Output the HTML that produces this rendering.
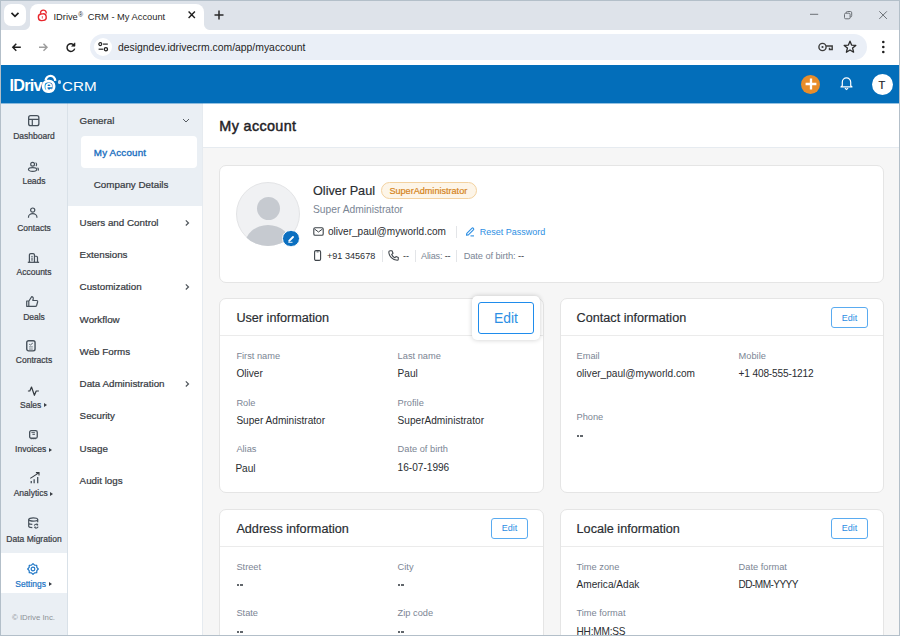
<!DOCTYPE html>
<html><head><meta charset="utf-8">
<style>
*{box-sizing:border-box;margin:0;padding:0}
html,body{width:900px;height:636px;overflow:hidden;background:#fff}
body{font-family:"Liberation Sans",sans-serif;position:relative}
.t{position:absolute;white-space:nowrap}
svg{position:absolute;overflow:visible}
</style></head><body>
<div class="t" style="left:0px;top:0px;width:900px;height:30px;background:#dee3ea"></div>
<div class="t" style="left:30px;top:4px;width:174px;height:27px;background:#fff;border-radius:8px 8px 0 0"></div>
<div class="t" style="left:24px;top:24px;width:6px;height:6px;background:radial-gradient(circle at 0 0,#dee3ea 5.5px,#fff 6.5px)"></div>
<div class="t" style="left:204px;top:24px;width:6px;height:6px;background:radial-gradient(circle at 6px 0,#dee3ea 5.5px,#fff 6.5px)"></div>
<div class="t" style="left:4px;top:4px;width:22px;height:22px;background:#fff;border-radius:7px"></div>
<svg style="left:10px;top:11px" width="10" height="8" viewBox="0 0 10 8"><path d="M1.5 1.8 L5 5.3 L8.5 1.8" fill="none" stroke="#1f1f1f" stroke-width="1.7"/></svg>
<svg style="left:37px;top:9px" width="11" height="12" viewBox="0 0 11 12"><path d="M3.6 4.8 L3.5 3.6 A2.9 2.9 0 0 1 9.2 3.4 L9.3 4.5" fill="none" stroke="#e8262c" stroke-width="1.3"/><rect x="1.4" y="4.9" width="7.8" height="6.6" rx="3" transform="rotate(-6 5.3 8.2)" fill="none" stroke="#e8262c" stroke-width="1.4"/><rect x="4.8" y="7.1" width="1.1" height="2.4" fill="#e8262c" opacity="0.7"/></svg>
<div class="t" style="left:53.50px;top:10.33px;font-size:9.3px;line-height:9.3px;color:#1f1f1f;font-weight:normal;">IDrive<span style="font-size:6.5px;vertical-align:3px;margin-left:0.5px;margin-right:2px">®</span> CRM - My Account</div>
<svg style="left:188.2px;top:11.4px" width="8" height="8" viewBox="0 0 8 8"><path d="M0.6 0.6 L6.9 6.9 M6.9 0.6 L0.6 6.9" stroke="#1f1f1f" stroke-width="1.4"/></svg>
<svg style="left:214px;top:10px" width="10" height="10" viewBox="0 0 10 10"><path d="M0.5 5 H9.5 M5 0.5 V9.5" stroke="#2a2a2a" stroke-width="1.5"/></svg>
<svg style="left:810px;top:10px" width="9" height="9" viewBox="0 0 9 9"><path d="M0 4.3 H8.2" stroke="#6b7076" stroke-width="1"/></svg>
<svg style="left:844px;top:11px" width="9" height="9" viewBox="0 0 9 9"><rect x="0.5" y="2.2" width="5.6" height="5.6" rx="1.2" fill="none" stroke="#6b7076" stroke-width="1"/><path d="M2.2 2.2 V1.8 A1.3 1.3 0 0 1 3.5 0.5 H6.4 A1.3 1.3 0 0 1 7.7 1.8 V4.7 A1.3 1.3 0 0 1 6.4 6 H6.1" fill="none" stroke="#6b7076" stroke-width="1"/></svg>
<svg style="left:878.7px;top:11.2px" width="9" height="9" viewBox="0 0 9 9"><path d="M0.3 0.3 L7.9 7.9 M7.9 0.3 L0.3 7.9" stroke="#6b7076" stroke-width="1"/></svg>
<div class="t" style="left:1px;top:30px;width:898px;height:35px;background:#fff;border-radius:6px 6px 0 0"></div>
<div class="t" style="left:90px;top:34px;width:777px;height:26px;background:#eaeff7;border-radius:13px"></div>
<div class="t" style="left:93.6px;top:37.8px;width:18px;height:18px;background:#fff;border-radius:50%"></div>
<svg style="left:12px;top:42.8px" width="9" height="9" viewBox="0 0 9 9"><path d="M4.3 0.7 L0.8 4.2 L4.3 7.7 M1 4.2 H8.8" fill="none" stroke="#1f1f1f" stroke-width="1.45"/></svg>
<svg style="left:38.8px;top:42.8px" width="9" height="9" viewBox="0 0 9 9"><path d="M4.5 0.7 L8 4.2 L4.5 7.7 M7.8 4.2 H0" fill="none" stroke="#9e9e9e" stroke-width="1.45"/></svg>
<svg style="left:65.6px;top:42.8px" width="10" height="9" viewBox="0 0 10 9"><path d="M8.3 2.6 A3.9 3.9 0 1 0 8.7 5.6" fill="none" stroke="#1f1f1f" stroke-width="1.45"/><path d="M5.6 3.2 H9 V-0.2 Z" fill="#1f1f1f" stroke="#1f1f1f" stroke-width="0.6" stroke-linejoin="round"/></svg>
<svg style="left:97.5px;top:42.3px" width="11" height="10" viewBox="0 0 11 10"><circle cx="2.3" cy="2.1" r="1.5" fill="none" stroke="#1f1f1f" stroke-width="1.15"/><path d="M5 2.1 H9.8" stroke="#1f1f1f" stroke-width="1.15"/><circle cx="7.9" cy="7.2" r="1.6" fill="none" stroke="#1f1f1f" stroke-width="1.3"/><path d="M0.6 7.2 H5.2" stroke="#1f1f1f" stroke-width="1.15"/></svg>
<div class="t" style="left:118.00px;top:43.10px;font-size:10.4px;line-height:10.4px;color:#1f1f1f;font-weight:normal;">designdev.idrivecrm.com/app/myaccount</div>
<svg style="left:818px;top:41px" width="16" height="12" viewBox="0 0 16 12"><circle cx="4.5" cy="6" r="3.6" fill="none" stroke="#3c3c3c" stroke-width="1.4"/><circle cx="4.5" cy="6" r="1.1" fill="#3c3c3c"/><path d="M8.1 5 H14.2 V8.5 H11.5 V6.8" fill="none" stroke="#3c3c3c" stroke-width="1.4"/></svg>
<svg style="left:843px;top:40px" width="14" height="14" viewBox="0 0 14 14"><path d="M7 1.2 L8.6 5.1 L12.8 5.4 L9.6 8.1 L10.6 12.2 L7 10 L3.4 12.2 L4.4 8.1 L1.2 5.4 L5.4 5.1 Z" fill="none" stroke="#2a2a2a" stroke-width="1.3" stroke-linejoin="round"/></svg>
<svg style="left:881px;top:40px" width="5" height="14" viewBox="0 0 5 14"><circle cx="2.3" cy="2" r="1.3" fill="#1f1f1f"/><circle cx="2.3" cy="7" r="1.3" fill="#1f1f1f"/><circle cx="2.3" cy="12" r="1.3" fill="#1f1f1f"/></svg>
<div class="t" style="left:0px;top:65px;width:900px;height:38px;background:#036eba"></div>
<div class="t" style="left:9.50px;top:76.89px;font-size:16.2px;line-height:16.2px;color:#fff;font-weight:bold;letter-spacing:-0.75px">IDriv</div>
<svg style="left:38px;top:70px" width="24" height="26" viewBox="0 0 24 26"><path d="M7.6 10.5 A4.9 5.6 0 0 1 17.3 10.9" fill="none" stroke="#fff" stroke-width="2.4"/><rect x="5.3" y="11.2" width="10.7" height="10.5" rx="4.6" fill="#036eba" stroke="#fff" stroke-width="2.8"/><text x="10.7" y="20.6" text-anchor="middle" font-family="Liberation Sans" font-weight="bold" font-size="14" fill="#fff">e</text></svg>
<div class="t" style="left:57.5px;top:80px;width:3.5px;height:3.5px;border-radius:50%;background:#cfe0f0"></div>
<div class="t" style="left:62.00px;top:77.73px;font-size:15.2px;line-height:15.2px;color:#fff;font-weight:normal;transform:scaleY(0.82);transform-origin:0 90%;">CRM</div>
<div class="t" style="left:801.3px;top:74.8px;width:19.2px;height:19.2px;background:#e88d2a;border-radius:50%"></div>
<svg style="left:805px;top:78px" width="12" height="12" viewBox="0 0 12 12"><path d="M6 0.6 V11.4 M0.6 6 H11.4" stroke="#fff" stroke-width="2.3"/></svg>
<svg style="left:840px;top:76px" width="13" height="14" viewBox="0 0 13 14"><path d="M2.3 9.6 V6.2 A4.2 4.3 0 0 1 10.7 6.2 V9.6 L12 10.9 H1 Z" fill="none" stroke="#fff" stroke-width="1.2" stroke-linejoin="round"/><path d="M4.9 12.1 L6.5 13.5 L8.1 12.1" fill="none" stroke="#fff" stroke-width="1.1"/></svg>
<div class="t" style="left:872px;top:73.5px;width:21px;height:21px;background:#fff;border-radius:50%"></div>
<div class="t" style="left:878.60px;top:79.89px;font-size:11px;line-height:11px;color:#1f2328;font-weight:normal;-webkit-text-stroke:0.2px currentColor">T</div>
<div class="t" style="left:0px;top:103px;width:68px;height:533px;background:#eaeff4;border-right:1px solid #d9e1e8"></div>
<div class="t" style="left:1px;top:553px;width:66px;height:40px;background:#fff"></div>
<svg style="left:28px;top:114.5px" width="14" height="14" viewBox="0 0 14 14"><rect x="0.65" y="0.65" width="10.2" height="10" rx="2" fill="none" stroke="#46505a" stroke-width="1.3"/><path d="M0.65 4.3 H10.85 M4.3 4.3 V10.65" stroke="#46505a" stroke-width="1.2"/></svg>
<svg style="left:27px;top:161px" width="14" height="14" viewBox="0 0 14 14"><circle cx="5.6" cy="3.3" r="1.9" fill="none" stroke="#46505a" stroke-width="1.2"/><path d="M8.6 1.6 A2.3 2.3 0 0 1 8.9 5.2" fill="none" stroke="#46505a" stroke-width="1.1"/><ellipse cx="5.6" cy="8.5" rx="4.15" ry="1.85" fill="none" stroke="#46505a" stroke-width="1.2"/><path d="M10.5 6.8 A2.6 2.2 0 0 1 11 9.7" fill="none" stroke="#46505a" stroke-width="1.1"/></svg>
<svg style="left:27px;top:206px" width="14" height="14" viewBox="0 0 14 14"><circle cx="5.7" cy="4.1" r="2.1" fill="none" stroke="#46505a" stroke-width="1.2"/><path d="M1.5 11.7 V11 A4.2 3.4 0 0 1 9.9 11 V11.7" fill="none" stroke="#46505a" stroke-width="1.2"/></svg>
<svg style="left:27px;top:252px" width="14" height="14" viewBox="0 0 14 14"><path d="M0.8 10.3 H12.1" stroke="#46505a" stroke-width="1.25"/><path d="M2.4 10.3 V3 A1.4 1.4 0 0 1 3.8 1.6 H6.05 A1.4 1.4 0 0 1 7.45 3 V10.3 M7.45 4.25 H9.3 A1.2 1.2 0 0 1 10.5 5.45 V10.3" fill="none" stroke="#46505a" stroke-width="1.2"/><circle cx="5" cy="4.4" r="0.65" fill="#46505a"/><path d="M5 5.6 V8.7" stroke="#46505a" stroke-width="1.1"/></svg>
<svg style="left:26px;top:296px" width="14" height="14" viewBox="0 0 14 14"><path d="M0.7 5 H2.8 V10.3 H0.7 Z M2.8 5.2 L5.6 0.7 C6.9 0.7 7.5 1.7 7.2 3 L6.8 4.5 H10.5 C11.4 4.5 11.8 5.2 11.6 6 L10.6 9.5 C10.4 10.1 10 10.3 9.4 10.3 H2.8" fill="none" stroke="#46505a" stroke-width="1.2" stroke-linejoin="round"/></svg>
<svg style="left:26px;top:339.5px" width="14" height="14" viewBox="0 0 14 14"><rect x="0.75" y="0.75" width="8.3" height="10.1" rx="1.8" fill="none" stroke="#46505a" stroke-width="1.4"/><path d="M3.2 4.1 L4.3 5 L6.8 3.1" fill="none" stroke="#46505a" stroke-width="0.9"/><path d="M3 6.6 H6.8 M3 8 H6.8 M3 9.3 H6.8" stroke="#8a939b" stroke-width="0.8"/></svg>
<svg style="left:27px;top:385.5px" width="14" height="14" viewBox="0 0 14 14"><path d="M0.9 5 H2.8 L4.5 1 L7.4 9.3 L9.2 5 H11.9" fill="none" stroke="#33393f" stroke-width="1.2" stroke-linejoin="round"/></svg>
<svg style="left:29px;top:430px" width="14" height="14" viewBox="0 0 14 14"><rect x="0.65" y="0.65" width="7.6" height="7.6" rx="1.5" fill="none" stroke="#46505a" stroke-width="1.3"/><path d="M2.4 2.5 H5.9" stroke="#46505a" stroke-width="0.8"/><path d="M3.4 4.3 H5.9" stroke="#46505a" stroke-width="1.1"/><path d="M1.8 9.4 H2.8 M3.7 9.4 H4.7 M5.6 9.4 H6.6" stroke="#9aa2aa" stroke-width="0.7"/></svg>
<svg style="left:29.5px;top:471.5px" width="14" height="14" viewBox="0 0 14 14"><path d="M1.25 9.1 V11.3 M4.15 7.2 V11.3 M7.7 4.9 V11.3" stroke="#46505a" stroke-width="1.3"/><path d="M0.3 6.4 L8.4 1.1 M5.9 0.6 H9 V3.6" fill="none" stroke="#33393f" stroke-width="1.1"/></svg>
<svg style="left:27.5px;top:516.5px" width="14" height="14" viewBox="0 0 14 14"><ellipse cx="5.2" cy="2.5" rx="4.5" ry="1.65" fill="none" stroke="#46505a" stroke-width="1.2"/><path d="M0.7 2.5 V9.3 C0.7 10.1 2 10.6 4.3 10.7 M0.7 6.1 C0.7 6.9 2 7.3 4.3 7.4 M9.7 2.5 V5.2" fill="none" stroke="#46505a" stroke-width="1.2"/><path d="M6.3 8.6 A2 2 0 0 1 9.9 8.1 M10.1 9.6 A2 2 0 0 1 6.5 10.2" fill="none" stroke="#46505a" stroke-width="1.1"/><path d="M9.2 6.6 L10.3 8.3 L8.5 8.5 Z M7.2 11.4 L6.1 9.7 L7.9 9.5 Z" fill="#46505a"/></svg>
<div class="t" style="left:-26.00px;width:120px;text-align:center;top:131.90px;font-size:8.5px;line-height:8.5px;color:#3b4046;font-weight:normal;-webkit-text-stroke:0.22px currentColor">Dashboard</div>
<div class="t" style="left:-26.00px;width:120px;text-align:center;top:176.60px;font-size:8.5px;line-height:8.5px;color:#3b4046;font-weight:normal;-webkit-text-stroke:0.22px currentColor">Leads</div>
<div class="t" style="left:-26.00px;width:120px;text-align:center;top:223.60px;font-size:8.5px;line-height:8.5px;color:#3b4046;font-weight:normal;-webkit-text-stroke:0.22px currentColor">Contacts</div>
<div class="t" style="left:-26.00px;width:120px;text-align:center;top:268.00px;font-size:8.5px;line-height:8.5px;color:#3b4046;font-weight:normal;-webkit-text-stroke:0.22px currentColor">Accounts</div>
<div class="t" style="left:-26.00px;width:120px;text-align:center;top:312.60px;font-size:8.5px;line-height:8.5px;color:#3b4046;font-weight:normal;-webkit-text-stroke:0.22px currentColor">Deals</div>
<div class="t" style="left:-26.00px;width:120px;text-align:center;top:356.30px;font-size:8.5px;line-height:8.5px;color:#3b4046;font-weight:normal;-webkit-text-stroke:0.22px currentColor">Contracts</div>
<div class="t" style="left:-26.50px;width:120px;text-align:center;top:400.80px;font-size:8.5px;line-height:8.5px;color:#3b4046;font-weight:normal;-webkit-text-stroke:0.22px currentColor">Sales<span style="display:inline-block;width:0;height:0;border-left:3px solid #3b4046;border-top:2.2px solid transparent;border-bottom:2.2px solid transparent;margin-left:2.6px;vertical-align:0.5px"></span></div>
<div class="t" style="left:-26.50px;width:120px;text-align:center;top:445.00px;font-size:8.5px;line-height:8.5px;color:#3b4046;font-weight:normal;-webkit-text-stroke:0.22px currentColor">Invoices<span style="display:inline-block;width:0;height:0;border-left:3px solid #3b4046;border-top:2.2px solid transparent;border-bottom:2.2px solid transparent;margin-left:2.6px;vertical-align:0.5px"></span></div>
<div class="t" style="left:-26.50px;width:120px;text-align:center;top:489.30px;font-size:8.5px;line-height:8.5px;color:#3b4046;font-weight:normal;-webkit-text-stroke:0.22px currentColor">Analytics<span style="display:inline-block;width:0;height:0;border-left:3px solid #3b4046;border-top:2.2px solid transparent;border-bottom:2.2px solid transparent;margin-left:2.6px;vertical-align:0.5px"></span></div>
<div class="t" style="left:-26.00px;width:120px;text-align:center;top:534.50px;font-size:8.5px;line-height:8.5px;color:#3b4046;font-weight:normal;-webkit-text-stroke:0.22px currentColor">Data Migration</div>
<svg style="left:27.3px;top:562.5px" width="12" height="12" viewBox="0 0 11.3 11.3"><path d="M5.65 0.65 L7.14 2.05 L9.19 2.11 L9.25 4.16 L10.65 5.65 L9.25 7.14 L9.19 9.19 L7.14 9.25 L5.65 10.65 L4.16 9.25 L2.11 9.19 L2.05 7.14 L0.65 5.65 L2.05 4.16 L2.11 2.11 L4.16 2.05 Z" fill="none" stroke="#1b74c5" stroke-width="1.1" stroke-linejoin="round"/><circle cx="5.65" cy="5.65" r="1.75" fill="none" stroke="#1b74c5" stroke-width="1.05"/></svg>
<div class="t" style="left:-26.50px;width:120px;text-align:center;top:579.70px;font-size:8.5px;line-height:8.5px;color:#1b74c5;font-weight:normal;-webkit-text-stroke:0.2px currentColor">Settings<span style="display:inline-block;width:0;height:0;border-left:3px solid #3b4046;border-top:2.2px solid transparent;border-bottom:2.2px solid transparent;margin-left:2.6px;vertical-align:0.5px;-webkit-text-stroke:0"></span></div>
<div class="t" style="left:-26.50px;width:120px;text-align:center;top:614.20px;font-size:7.8px;line-height:7.8px;color:#8c9196;font-weight:normal;">© IDrive Inc.</div>
<div class="t" style="left:68px;top:103px;width:135px;height:533px;background:#fff;border-right:1px solid #e6ebf0"></div>
<div class="t" style="left:68px;top:103px;width:134px;height:103px;background:#eaeff4"></div>
<div class="t" style="left:81px;top:136px;width:116px;height:32px;background:#fff;border-radius:4px"></div>
<div class="t" style="left:79.60px;top:115.80px;font-size:9.8px;line-height:9.8px;color:#363a3f;font-weight:normal;-webkit-text-stroke:0.22px currentColor">General</div>
<svg style="left:182px;top:118.3px" width="8" height="6" viewBox="0 0 8 6"><path d="M1 1 L4 4 L7 1" fill="none" stroke="#555b61" stroke-width="1"/></svg>
<div class="t" style="left:93.80px;top:147.90px;font-size:9.8px;line-height:9.8px;color:#1a6fc0;font-weight:normal;letter-spacing:0.18px;-webkit-text-stroke:0.35px currentColor">My Account</div>
<div class="t" style="left:93.80px;top:180.00px;font-size:9.8px;line-height:9.8px;color:#363a3f;font-weight:normal;-webkit-text-stroke:0.22px currentColor">Company Details</div>
<div class="t" style="left:79.60px;top:217.60px;font-size:9.8px;line-height:9.8px;color:#363a3f;font-weight:normal;-webkit-text-stroke:0.22px currentColor">Users and Control</div>
<svg style="left:184.8px;top:219.5px" width="5" height="6" viewBox="0 0 5 6"><path d="M0.8 0.4 L3.5 2.95 L0.8 5.5" fill="none" stroke="#50565c" stroke-width="1.2"/></svg>
<div class="t" style="left:79.60px;top:249.90px;font-size:9.8px;line-height:9.8px;color:#363a3f;font-weight:normal;-webkit-text-stroke:0.22px currentColor">Extensions</div>
<div class="t" style="left:79.60px;top:282.20px;font-size:9.8px;line-height:9.8px;color:#363a3f;font-weight:normal;-webkit-text-stroke:0.22px currentColor">Customization</div>
<svg style="left:184.8px;top:284.1px" width="5" height="6" viewBox="0 0 5 6"><path d="M0.8 0.4 L3.5 2.95 L0.8 5.5" fill="none" stroke="#50565c" stroke-width="1.2"/></svg>
<div class="t" style="left:79.60px;top:314.50px;font-size:9.8px;line-height:9.8px;color:#363a3f;font-weight:normal;-webkit-text-stroke:0.22px currentColor">Workflow</div>
<div class="t" style="left:79.60px;top:346.80px;font-size:9.8px;line-height:9.8px;color:#363a3f;font-weight:normal;-webkit-text-stroke:0.22px currentColor">Web Forms</div>
<div class="t" style="left:79.60px;top:379.10px;font-size:9.8px;line-height:9.8px;color:#363a3f;font-weight:normal;-webkit-text-stroke:0.22px currentColor">Data Administration</div>
<svg style="left:184.8px;top:381.0px" width="5" height="6" viewBox="0 0 5 6"><path d="M0.8 0.4 L3.5 2.95 L0.8 5.5" fill="none" stroke="#50565c" stroke-width="1.2"/></svg>
<div class="t" style="left:79.60px;top:411.40px;font-size:9.8px;line-height:9.8px;color:#363a3f;font-weight:normal;-webkit-text-stroke:0.22px currentColor">Security</div>
<div class="t" style="left:79.60px;top:443.70px;font-size:9.8px;line-height:9.8px;color:#363a3f;font-weight:normal;-webkit-text-stroke:0.22px currentColor">Usage</div>
<div class="t" style="left:79.60px;top:476.00px;font-size:9.8px;line-height:9.8px;color:#363a3f;font-weight:normal;-webkit-text-stroke:0.22px currentColor">Audit logs</div>
<div class="t" style="left:203px;top:103px;width:697px;height:533px;background:#f6f6f6"></div>
<div class="t" style="left:203px;top:103px;width:697px;height:45px;background:#fff;border-bottom:1px solid #e6ebf0"></div>
<div class="t" style="left:219.30px;top:119.01px;font-size:14.4px;line-height:14.4px;color:#1f2226;font-weight:normal;letter-spacing:0.35px;-webkit-text-stroke:0.45px currentColor">My account</div>
<div class="t" style="left:219px;top:165px;width:665px;height:118px;background:#fff;border:1px solid #e5e5e5;border-radius:7px"></div>
<div class="t" style="left:236px;top:182px;width:64px;height:64px;background:#f0f1f3;border:1px solid #e3e4e6;border-radius:50%;overflow:hidden"></div>
<div class="t" style="left:236px;top:182px;width:64px;height:64px;border-radius:50%;overflow:hidden"><div class="t" style="left:20.5px;top:15.3px;width:23.2px;height:23.2px;border-radius:50%;background:#c6cad0"></div><div class="t" style="left:9px;top:42.5px;width:46px;height:40px;border-radius:50%;background:#c6cad0"></div></div>
<div class="t" style="left:282px;top:229.5px;width:17.5px;height:17.5px;background:#0b6fc0;border:1.8px solid #fff;border-radius:50%"></div>
<svg style="left:286px;top:233.5px" width="10" height="10" viewBox="0 0 10 10"><path d="M3.2 6.8 L7 3" stroke="#fff" stroke-width="1.9" stroke-linecap="round"/><path d="M2.3 8.3 H6.5" stroke="#fff" stroke-width="0.9"/></svg>
<div class="t" style="left:313.00px;top:185.15px;font-size:12.7px;line-height:12.7px;color:#2a2d31;font-weight:normal;-webkit-text-stroke:0.18px currentColor;">Oliver Paul</div>
<div class="t" style="left:380.5px;top:182px;width:96.5px;height:17px;background:#fdf5e8;border:1px solid #f3d2a0;border-radius:9px"></div>
<div class="t" style="left:389.40px;top:186.50px;font-size:9.1px;line-height:9.1px;color:#d5841a;font-weight:normal;-webkit-text-stroke:0.2px currentColor">SuperAdministrator</div>
<div class="t" style="left:313.00px;top:204.82px;font-size:10.25px;line-height:10.25px;color:#7a8594;font-weight:normal;">Super Administrator</div>
<svg style="left:313px;top:227px" width="11" height="9" viewBox="0 0 11 9"><rect x="0.8" y="0.8" width="9.4" height="7.4" rx="1.3" fill="none" stroke="#3e444a" stroke-width="1.1"/><path d="M1.5 2 L5.5 5 L9.5 2" fill="none" stroke="#3e444a" stroke-width="1"/></svg>
<div class="t" style="left:328.00px;top:227.39px;font-size:10.05px;line-height:10.05px;color:#2a2d31;font-weight:normal;">oliver_paul@myworld.com</div>
<div class="t" style="left:456px;top:226px;width:1px;height:12px;background:#e3e5e8"></div>
<svg style="left:465px;top:227px" width="10" height="10" viewBox="0 0 10 10"><path d="M1.5 8.3 L1.8 6.3 L6.8 1.3 A1 1 0 0 1 8.4 2.9 L3.4 7.9 Z" fill="none" stroke="#2e8fe3" stroke-width="1.1" stroke-linejoin="round"/><path d="M5.5 8.9 H9" stroke="#2e8fe3" stroke-width="1.1"/></svg>
<div class="t" style="left:479.70px;top:227.88px;font-size:9.0px;line-height:9.0px;color:#2e8fe3;font-weight:normal;">Reset Password</div>
<svg style="left:314px;top:250px" width="7" height="11" viewBox="0 0 7 11"><rect x="0.6" y="0.6" width="6" height="9.8" rx="1.4" fill="none" stroke="#3e444a" stroke-width="1.1"/><path d="M2.6 1.9 H4.6" stroke="#3e444a" stroke-width="0.9"/></svg>
<div class="t" style="left:327.00px;top:252.10px;font-size:9.1px;line-height:9.1px;color:#2a2d31;font-weight:normal;">+91 345678</div>
<div class="t" style="left:381.5px;top:250px;width:1px;height:12px;background:#e3e5e8"></div>
<svg style="left:388px;top:250px" width="11" height="11" viewBox="0 0 11 11"><path d="M2.2 0.8 L4 0.8 L5 3.3 L3.7 4.5 C4.4 6.2 5.3 7.1 6.8 7.8 L8 6.5 L10.3 7.5 L10.3 9.3 C10.3 9.9 9.8 10.3 9.2 10.3 C4.5 10 1 6.4 0.8 2 C0.8 1.3 1.4 0.8 2.2 0.8 Z" fill="none" stroke="#3e444a" stroke-width="1.05" stroke-linejoin="round"/></svg>
<div class="t" style="left:403.00px;top:252.10px;font-size:9.1px;line-height:9.1px;color:#2a2d31;font-weight:normal;">--</div>
<div class="t" style="left:414.5px;top:250px;width:1px;height:12px;background:#e3e5e8"></div>
<div class="t" style="left:421.00px;top:252.10px;font-size:9.1px;line-height:9.1px;color:#7a8594;font-weight:normal;letter-spacing:-0.15px">Alias: <span style="color:#2b2f33">--</span></div>
<div class="t" style="left:456px;top:250px;width:1px;height:12px;background:#e3e5e8"></div>
<div class="t" style="left:463.70px;top:251.93px;font-size:9.3px;line-height:9.3px;color:#7a8594;font-weight:normal;letter-spacing:-0.1px">Date of birth: <span style="color:#2b2f33">--</span></div>
<div class="t" style="left:219px;top:298px;width:325px;height:195px;background:#fff;border:1px solid #e5e5e5;border-radius:7px"></div>
<div class="t" style="left:220px;top:335px;width:323px;height:1px;background:#ebebeb"></div>
<div class="t" style="left:236.40px;top:312.39px;font-size:12.65px;line-height:12.65px;color:#2a2d31;font-weight:normal;-webkit-text-stroke:0.18px currentColor;">User information</div>
<div class="t" style="left:560px;top:298px;width:324px;height:195px;background:#fff;border:1px solid #e5e5e5;border-radius:7px"></div>
<div class="t" style="left:561px;top:335px;width:322px;height:1px;background:#ebebeb"></div>
<div class="t" style="left:576.60px;top:312.39px;font-size:12.65px;line-height:12.65px;color:#2a2d31;font-weight:normal;-webkit-text-stroke:0.18px currentColor;">Contact information</div>
<div class="t" style="left:219px;top:509px;width:325px;height:195px;background:#fff;border:1px solid #e5e5e5;border-radius:7px"></div>
<div class="t" style="left:220px;top:546px;width:323px;height:1px;background:#ebebeb"></div>
<div class="t" style="left:236.40px;top:523.39px;font-size:12.65px;line-height:12.65px;color:#2a2d31;font-weight:normal;-webkit-text-stroke:0.18px currentColor;">Address information</div>
<div class="t" style="left:560px;top:509px;width:324px;height:195px;background:#fff;border:1px solid #e5e5e5;border-radius:7px"></div>
<div class="t" style="left:561px;top:546px;width:322px;height:1px;background:#ebebeb"></div>
<div class="t" style="left:576.60px;top:523.39px;font-size:12.65px;line-height:12.65px;color:#2a2d31;font-weight:normal;-webkit-text-stroke:0.18px currentColor;">Locale information</div>
<div class="t" style="left:472px;top:296px;width:68px;height:44px;background:#fff;border-radius:5px;box-shadow:0 0 5px rgba(0,0,0,0.2)"></div>
<div class="t" style="left:478px;top:302px;width:56px;height:32px;border:1.5px solid #1f8cec;border-radius:3px"></div>
<div class="t" style="left:494.00px;top:312.23px;font-size:13.9px;line-height:13.9px;color:#2c8fe4;font-weight:normal;">Edit</div>
<div class="t" style="left:831px;top:307px;width:37px;height:21px;border:1px solid #5aabf0;border-radius:3px"></div>
<div class="t" style="left:841.80px;top:313.88px;font-size:9.0px;line-height:9.0px;color:#2d8de3;font-weight:normal;">Edit</div>
<div class="t" style="left:491px;top:517.5px;width:37px;height:21px;border:1px solid #5aabf0;border-radius:3px"></div>
<div class="t" style="left:501.80px;top:524.38px;font-size:9.0px;line-height:9.0px;color:#2d8de3;font-weight:normal;">Edit</div>
<div class="t" style="left:831px;top:517.5px;width:37px;height:21px;border:1px solid #5aabf0;border-radius:3px"></div>
<div class="t" style="left:841.80px;top:524.38px;font-size:9.0px;line-height:9.0px;color:#2d8de3;font-weight:normal;">Edit</div>
<div class="t" style="left:236.40px;top:352.17px;font-size:9.25px;line-height:9.25px;color:#7b8594;font-weight:normal;">First name</div>
<div class="t" style="left:236.40px;top:369.45px;font-size:10.1px;line-height:10.1px;color:#2a2d31;font-weight:normal;letter-spacing:0px">Oliver</div>
<div class="t" style="left:397.60px;top:352.17px;font-size:9.25px;line-height:9.25px;color:#7b8594;font-weight:normal;">Last name</div>
<div class="t" style="left:397.60px;top:369.45px;font-size:10.1px;line-height:10.1px;color:#2a2d31;font-weight:normal;letter-spacing:0px">Paul</div>
<div class="t" style="left:236.40px;top:398.77px;font-size:9.25px;line-height:9.25px;color:#7b8594;font-weight:normal;">Role</div>
<div class="t" style="left:236.40px;top:416.15px;font-size:10.1px;line-height:10.1px;color:#2a2d31;font-weight:normal;letter-spacing:0px">Super Administrator</div>
<div class="t" style="left:397.60px;top:398.77px;font-size:9.25px;line-height:9.25px;color:#7b8594;font-weight:normal;">Profile</div>
<div class="t" style="left:397.60px;top:416.15px;font-size:10.1px;line-height:10.1px;color:#2a2d31;font-weight:normal;letter-spacing:0px">SuperAdministrator</div>
<div class="t" style="left:236.40px;top:445.27px;font-size:9.25px;line-height:9.25px;color:#7b8594;font-weight:normal;">Alias</div>
<div class="t" style="left:235.40px;top:463.65px;font-size:10.1px;line-height:10.1px;color:#2a2d31;font-weight:normal;">Paul</div>
<div class="t" style="left:397.60px;top:445.27px;font-size:9.25px;line-height:9.25px;color:#7b8594;font-weight:normal;">Date of birth</div>
<div class="t" style="left:397.60px;top:462.95px;font-size:10.1px;line-height:10.1px;color:#2a2d31;font-weight:normal;letter-spacing:0px">16-07-1996</div>
<div class="t" style="left:576.50px;top:351.97px;font-size:9.25px;line-height:9.25px;color:#7b8594;font-weight:normal;">Email</div>
<div class="t" style="left:576.50px;top:369.15px;font-size:10.1px;line-height:10.1px;color:#2a2d31;font-weight:normal;letter-spacing:0px">oliver_paul@myworld.com</div>
<div class="t" style="left:738.60px;top:351.97px;font-size:9.25px;line-height:9.25px;color:#7b8594;font-weight:normal;">Mobile</div>
<div class="t" style="left:738.60px;top:369.15px;font-size:10.1px;line-height:10.1px;color:#2a2d31;font-weight:normal;letter-spacing:-0.15px">+1 408-555-1212</div>
<div class="t" style="left:576.50px;top:413.07px;font-size:9.25px;line-height:9.25px;color:#7b8594;font-weight:normal;">Phone</div>
<div class="t" style="left:576.70px;top:435.30px;width:2.6px;height:1.8px;background:#62676c"></div>
<div class="t" style="left:580.10px;top:435.30px;width:2.6px;height:1.8px;background:#62676c"></div>
<div class="t" style="left:236.40px;top:562.57px;font-size:9.25px;line-height:9.25px;color:#7b8594;font-weight:normal;">Street</div>
<div class="t" style="left:236.60px;top:584.30px;width:2.6px;height:1.8px;background:#62676c"></div>
<div class="t" style="left:240.00px;top:584.30px;width:2.6px;height:1.8px;background:#62676c"></div>
<div class="t" style="left:397.60px;top:562.57px;font-size:9.25px;line-height:9.25px;color:#7b8594;font-weight:normal;">City</div>
<div class="t" style="left:397.80px;top:584.30px;width:2.6px;height:1.8px;background:#62676c"></div>
<div class="t" style="left:401.20px;top:584.30px;width:2.6px;height:1.8px;background:#62676c"></div>
<div class="t" style="left:236.40px;top:609.47px;font-size:9.25px;line-height:9.25px;color:#7b8594;font-weight:normal;">State</div>
<div class="t" style="left:236.60px;top:631.30px;width:2.6px;height:1.8px;background:#62676c"></div>
<div class="t" style="left:240.00px;top:631.30px;width:2.6px;height:1.8px;background:#62676c"></div>
<div class="t" style="left:397.60px;top:609.47px;font-size:9.25px;line-height:9.25px;color:#7b8594;font-weight:normal;">Zip code</div>
<div class="t" style="left:397.80px;top:631.30px;width:2.6px;height:1.8px;background:#62676c"></div>
<div class="t" style="left:401.20px;top:631.30px;width:2.6px;height:1.8px;background:#62676c"></div>
<div class="t" style="left:576.50px;top:562.57px;font-size:9.25px;line-height:9.25px;color:#7b8594;font-weight:normal;">Time zone</div>
<div class="t" style="left:576.50px;top:579.85px;font-size:10.1px;line-height:10.1px;color:#2a2d31;font-weight:normal;letter-spacing:0px">America/Adak</div>
<div class="t" style="left:738.60px;top:562.57px;font-size:9.25px;line-height:9.25px;color:#7b8594;font-weight:normal;">Date format</div>
<div class="t" style="left:738.60px;top:579.85px;font-size:10.1px;line-height:10.1px;color:#2a2d31;font-weight:normal;letter-spacing:-0.57px">DD-MM-YYYY</div>
<div class="t" style="left:576.50px;top:609.47px;font-size:9.25px;line-height:9.25px;color:#7b8594;font-weight:normal;">Time format</div>
<div class="t" style="left:576.50px;top:626.55px;font-size:10.1px;line-height:10.1px;color:#2a2d31;font-weight:normal;letter-spacing:-0.2px">HH:MM:SS</div>
<div class="t" style="left:1px;top:103px;width:898px;height:1px;background:rgba(3,110,186,0.42)"></div>
<div class="t" style="left:0;top:0;width:900px;height:636px;border:1px solid #b3bfc9;z-index:50"></div>
</body></html>
